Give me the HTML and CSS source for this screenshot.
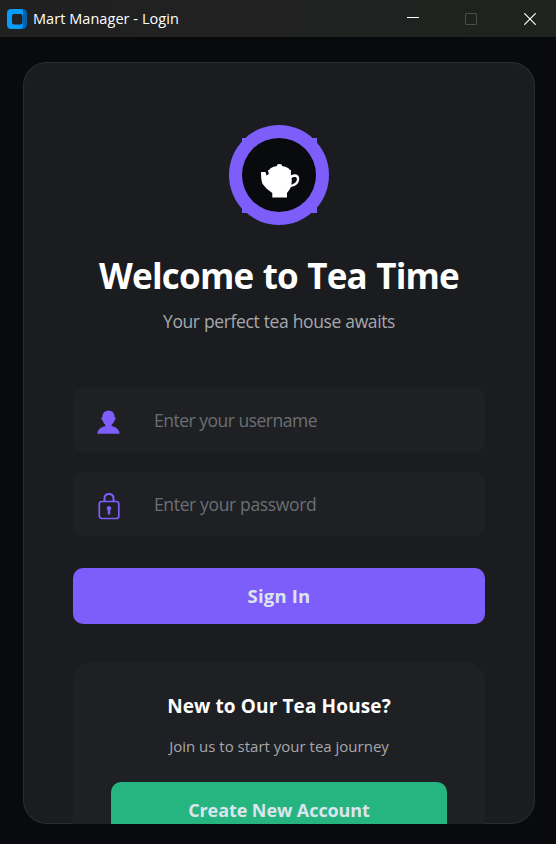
FILE: index.html
```html
<!DOCTYPE html>
<html lang="en">
<head>
<meta charset="utf-8">
<title>Mart Manager - Login</title>
<link rel="stylesheet" href="styles.css">
</head>
<body>
<div class="window">
  <header class="titlebar">
    <svg class="app-icon" width="20" height="20" viewBox="0 0 20 20"><rect width="20" height="20" rx="4.500" fill="#0063b1"/><path d="M4.500 0H13.500Q16 0 16 2.500V16Q16 20 12.500 20H4.500Q0 20 0 15.500V4.500Q0 0 4.500 0Z" fill="#0a9bff"/><rect x="5" y="5" width="10.500" height="10.500" rx="2" fill="#202221"/></svg>
    <span class="app-title">Mart Manager - Login</span>
    <div class="controls">
      <svg class="minimize" width="12" height="12" viewBox="0 0 12 12"><path d="M0 4.500H12" stroke="#fff"/></svg>
      <svg width="12" height="12" viewBox="0 0 12 12"><rect x=".5" y=".5" width="11" height="11" rx=".5" fill="none" stroke="#4b4d4a"/></svg>
      <svg width="12" height="12" viewBox="0 0 12 12"><path d="M.3.300 11.700 11.700M11.700.300.300 11.700" stroke="#fff" stroke-width="1.200"/></svg>
    </div>
  </header>
  <main class="card">
    <svg class="logo" width="100" height="100" viewBox="0 0 100 100">
      <circle cx="50" cy="50" r="50" fill="#7e5efb"/>
      <path d="M13 13h5v5h-5zM83 13h5v5h-5zM13 83h5v5h-5zM83 83h5v5h-5z" fill="#7e5efb"/>
      <circle cx="50" cy="50" r="37" fill="#090a0e"/>
      <path d="M32 47H36.500L37.500 50.500 39.800 49 39 45.200Q41 44.700 41.500 43.200Q44.500 41.400 48 41V39.800Q50.500 38 53 39.800V41Q56.500 41.400 59.500 43.200Q60 44.700 62 45.200L61.800 49Q65 61.500 58 68V72.500H43.300V68Q38 65 34 59.500Q32 57 32 47Z" fill="#fff"/>
      <path d="M61.500 52.500Q63 50.500 66 50.500Q69.500 51 69 55Q68 60 61 61" fill="none" stroke="#fff" stroke-width="2.300"/>
    </svg>
    <h1 class="title"><span>Welcome to Tea Time</span></h1>
    <p class="subtitle"><span>Your perfect tea house awaits</span></p>
    <div class="field">
      <svg width="24" height="28" viewBox="0 0 24 28"><path d="M11.500 2.700C16 2.700 17.500 5 17.500 9 19 9 18.700 12.500 17.300 12.500Q16.500 15.500 14.500 17V18C19 19 22 21 22.700 25.700H.3C1 21 4 19 8.500 18V17Q6.500 15.500 5.700 12.500C4.300 12.500 4 9 5.500 9 5.500 5 7 2.700 11.500 2.700Z" fill="#7e5efb"/></svg>
      <span class="placeholder user">Enter your username</span>
    </div>
    <div class="field">
      <svg width="24" height="28" viewBox="0 0 24 28"><path d="M7.500 9V6.500Q7.500 2 12 2T16.500 6.500V9" fill="none" stroke="#7e5efb" stroke-width="2"/><rect x="2.300" y="9.500" width="19.500" height="17" rx="2.500" fill="none" stroke="#7e5efb" stroke-width="1.700"/><path d="M12 14a2.200 2.200 0 0 1 1.300 4v4.500H10.700V18a2.200 2.200 0 0 1 1.300-4Z" fill="#7e5efb"/></svg>
      <span class="placeholder pass">Enter your password</span>
    </div>
    <div class="button signin"><span>Sign In</span></div>
    <section class="join">
      <h2 class="join-title"><span>New to Our Tea House?</span></h2>
      <p class="join-text"><span>Join us to start your tea journey</span></p>
      <div class="button create"><span>Create New Account</span></div>
    </section>
  </main>
</div>
</body>
</html>
```
FILE: styles.css
```css
* { box-sizing: border-box; }
body {
  margin: 0;
  background: #090a0e;
  color: #fff;
  font-family: "Open Sans", "Noto Sans", sans-serif;
}
h1, h2, p { margin: 0; }
.window { height: 844px; overflow: hidden; }
.titlebar {
  height: 37px;
  display: flex;
  align-items: center;
  padding: 0 20px 0 7px;
  background: linear-gradient(90deg, #202020, #202221 60%, #1e231d);
}
.app-title { margin-left: 6px; font-size: 14.500px; letter-spacing: 0.050px; white-space: nowrap; }
.controls { display: flex; gap: 47px; margin-left: auto; }
.minimize { margin-right: -1px; }
.card {
  width: 512px;
  height: 762px;
  margin: 25px 0 0 23px;
  padding: 63px 50px 0;
  display: flex;
  flex-direction: column;
  background: #1b1c1f;
  box-shadow: inset 0 0 0 1px #2b2c30;
  border-radius: 24px;
  overflow: hidden;
}
.logo { align-self: center; flex: none; }
.title, .subtitle, .join-title, .join-text { text-align: center; white-space: nowrap; }
.title { margin-top: 26px; font-size: 35px; line-height: 50px; font-weight: 700; letter-spacing: -0.800px; word-spacing: 1px; }
.subtitle { margin-top: 7px; font-size: 17.500px; line-height: 26px; letter-spacing: -0.400px; word-spacing: 0.300px; color: #a5a8ad; }
.field {
  flex: none;
  display: flex;
  align-items: center;
  height: 64px;
  margin-bottom: 20px;
  padding: 4px 24px 0;
  border-radius: 10px;
  background: #1f2023;
}
.subtitle + .field { margin-top: 54px; }
.placeholder { margin: -4px 0 0 33px; font-size: 17.500px; color: #6b6f75; white-space: nowrap; }
.user { letter-spacing: -0.500px; }
.pass { letter-spacing: -0.350px; }
.button {
  flex: none;
  display: flex;
  justify-content: center;
  height: 56px;
  line-height: 56px;
  border-radius: 10px;
  font-size: 18px;
  font-weight: 700;
  color: #dce4ee;
  white-space: nowrap;
}
.signin { margin-top: 12px; font-size: 18.500px; letter-spacing: 0.200px; background: #7e5efb; }
.join {
  flex: none;
  height: 230px;
  margin-top: 38px;
  padding: 30px 38px 0;
  border-radius: 20px;
  background: #1f2023;
}
.join-title { font-size: 19px; line-height: 28px; font-weight: 700; letter-spacing: 0.120px; }
.join-text { margin-top: 14px; font-size: 15px; line-height: 24px; color: #a5a8ad; }
.create { margin-top: 24px; letter-spacing: -0.080px; background: #26b580; }
```
